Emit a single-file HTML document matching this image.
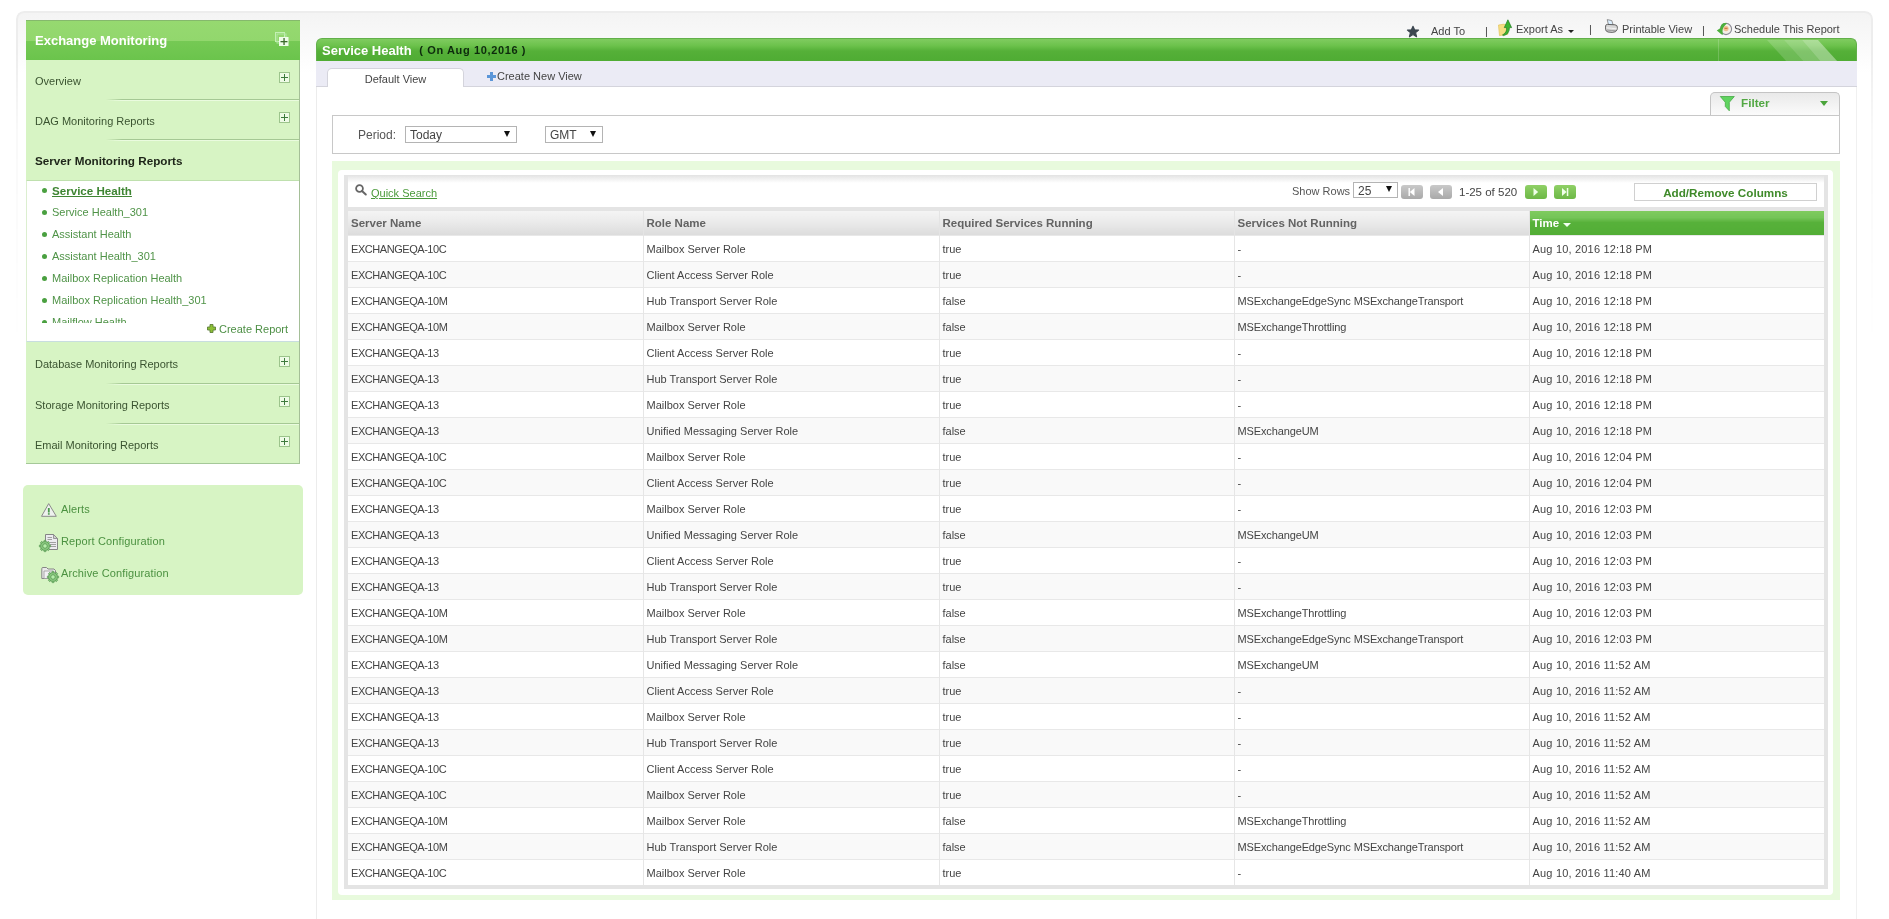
<!DOCTYPE html>
<html><head><meta charset="utf-8">
<style>
*{box-sizing:border-box;margin:0;padding:0}
html,body{width:1889px;height:919px;overflow:hidden;background:#fff;font-family:"Liberation Sans",sans-serif;font-size:11px;color:#444}
.abs{position:absolute}
svg{position:absolute;overflow:visible}
#outer{position:absolute;left:16px;top:11px;width:1857px;height:500px;border:2px solid #ededed;border-bottom:none;border-radius:8px 8px 0 0;background:linear-gradient(#f4f4f4,#f9f9f9 28px,#fff 60px);-webkit-mask-image:linear-gradient(#000 0,#000 40px,rgba(0,0,0,0.35) 120px,transparent 340px)}
#side{position:absolute;left:26px;top:20px;width:274px;height:444px;background:#d7f4c4;border-right:1px solid #a5bf98;border-bottom:1px solid #a5c898}
#sidehd{position:absolute;left:0;top:0;width:274px;height:40px;background:linear-gradient(#96d970,#92d76d 50%,#75c954 52%,#6bc44c);border-top:1px solid #85b96c;color:#fff;font-weight:bold;font-size:13px;padding:12px 0 0 9px}
.sitem{position:absolute;left:0;width:273px;height:40px;color:#3a5330;padding:14px 0 0 9px}
.sep{position:absolute;left:0;width:273px;height:1px;background:linear-gradient(to right,rgba(165,200,148,0) 0,rgba(165,200,148,0) 80px,#a5c894 96px,#a5c894)}
.sep:after{content:"";position:absolute;left:0;top:1px;width:273px;height:1px;background:linear-gradient(to right,rgba(236,252,226,0) 0,rgba(236,252,226,0) 80px,#eafbdf 96px,#eafbdf)}
.plus{position:absolute;left:253px;width:11px;height:11px;border:1px solid #9cc48c;background:#eefbe6}
.plus:before{content:"";position:absolute;left:1px;top:4px;width:7px;height:1px;background:#3d7a3d}
.plus:after{content:"";position:absolute;left:4px;top:1px;width:1px;height:7px;background:#3d7a3d}
#sub{position:absolute;left:0;top:160px;width:273px;height:162px;background:#fff;border-left:1px solid #dcefd0;border-top:1px solid #bfe0ae;border-bottom:1px solid #c8dde0}
.li{position:absolute;left:25px;color:#4f9347;font-size:11px;white-space:nowrap}
.li:before{content:"";position:absolute;left:-10px;top:3.5px;width:5px;height:5px;border-radius:50%;background:#4aa040}
#box2{position:absolute;left:23px;top:485px;width:280px;height:110px;background:#d7f4c4;border-radius:5px}
.b2{position:absolute;left:38px;color:#4b9140;font-size:11px;letter-spacing:0.12px}
#title{position:absolute;left:316px;top:38px;width:1541px;height:23px;border:1px solid #62b04a;border-bottom:none;border-radius:6px 6px 0 0;background:linear-gradient(#80cc60,#6cc24c 30%,#55b038 55%,#4fac33);color:#fff;font-weight:bold;font-size:13px;padding:4px 0 0 5px;overflow:hidden}
#tabbar{position:absolute;left:316px;top:61px;width:1541px;height:26px;background:#ebebf5;border-bottom:1px solid #d4d4dc}
#deftab{position:absolute;left:11px;top:7px;width:137px;height:19px;background:#fff;border:1px solid #d4d4dc;border-bottom:none;border-radius:5px 5px 0 0;font-size:11px;color:#444;text-align:center;padding-top:4px}
#content{position:absolute;left:316px;top:87px;width:1541px;height:840px;background:#fff;border-left:1px solid #ececec;border-right:1px solid #f0f0f0}
#filter{position:absolute;left:1710px;top:92px;width:130px;height:23px;border:1px solid #c4c4c4;border-bottom:none;border-radius:5px 5px 0 0;background:linear-gradient(#e9e9e9,#fbfbfb)}
#period{position:absolute;left:332px;top:115px;width:1508px;height:39px;border:1px solid #c8c8c8;background:#fff}
.sel{position:absolute;height:17px;border:1px solid #b4b4b4;background:#fff;font-size:12px;color:#444;padding:1px 0 0 4px}
.tri{position:absolute;width:0;height:0;border-left:3px solid transparent;border-right:3px solid transparent;border-top:6px solid #111}
#gpanel{position:absolute;left:332px;top:161px;width:1508px;height:739px;background:#e8fadd}
#wpanel{position:absolute;left:338px;top:170px;width:1495px;height:725px;background:#fff;border-radius:4px}
#gray{position:absolute;left:344px;top:175px;width:1484px;height:714px;background:#e4e4e4}
#qs{position:absolute;left:348px;top:176px;width:1476px;height:31px;background:linear-gradient(#e6e6e6,#fff 7px,#fff)}
.pbtn{position:absolute;top:9px;width:22px;height:14px;border-radius:3px}
.gbtn{background:linear-gradient(#c9c9c9,#a9a9a9)}
.grbtn{background:linear-gradient(#8fd066,#6db846)}
table{position:absolute;left:348px;top:211px;width:1476px;border-collapse:collapse;table-layout:fixed;background:#fff}
th{height:24px;text-align:left;font-weight:bold;color:#636363;font-size:11.5px;padding:0 0 0 3px;background:linear-gradient(#f4f4f4,#ececec 40%,#dcdcdc);border-right:1px solid #e4e4e4}
th.time{background:linear-gradient(#7fcb5f 0,#74c458 28%,#57b13a 48%,#52ad35);color:#fff;border-right:none;border-left:1px solid #f0f0f0}
td{height:26px;padding:2px 0 0 3px;color:#444;font-size:11px;border-top:1px solid #e8e8e8;border-right:1px solid #e6e6e6;white-space:nowrap;overflow:hidden}
td:last-child{border-right:none}
tr.alt td{background:#f9f9f9}
td:first-child{letter-spacing:-0.45px}
td:nth-child(4){letter-spacing:-0.13px}
td:last-child{letter-spacing:0.19px}
</style></head><body><div id="root" style="position:absolute;left:0;top:0;width:1889px;height:919px;overflow:hidden;will-change:transform">
<div id="outer"></div>
<div id="side">
  <div id="sidehd">Exchange Monitoring</div>
  <svg style="left:249px;top:12px" width="16" height="16" viewBox="0 0 16 16">
    <rect x="0.5" y="0.5" width="9" height="9" fill="none" stroke="#c4f0b4" stroke-width="1"/>
    <rect x="2" y="2" width="9" height="9" fill="none" stroke="#b0e8a0" stroke-width="1"/>
    <rect x="4" y="5" width="9.5" height="9" fill="#effce8"/>
    <rect x="5.5" y="9" width="7" height="1.3" fill="#3a6a2a"/><rect x="8.4" y="6" width="1.3" height="7" fill="#3a6a2a"/>
  </svg>
  <div class="sitem" style="top:41px">Overview</div>
  <div class="plus" style="top:52px"></div>
  <div class="sep" style="top:79px"></div>
  <div class="sitem" style="top:81px">DAG Monitoring Reports</div>
  <div class="plus" style="top:92px"></div>
  <div class="sep" style="top:119px"></div>
  <div class="sitem" style="top:120px;font-weight:bold;color:#1d2418;font-size:11.7px">Server Monitoring Reports</div>
  <div id="sub">
    <div class="li" style="top:3px;font-weight:bold;text-decoration:underline;text-underline-offset:0.5px;color:#3f8533;font-size:11.6px">Service Health</div>
    <div class="li" style="top:25px">Service Health_301</div>
    <div class="li" style="top:47px">Assistant Health</div>
    <div class="li" style="top:69px">Assistant Health_301</div>
    <div class="li" style="top:91px">Mailbox Replication Health</div>
    <div class="li" style="top:113px">Mailbox Replication Health_301</div>
    <div style="position:absolute;left:0;top:135px;width:270px;height:7px;overflow:hidden"><div class="li" style="top:0">Mailflow Health</div></div>
    <svg style="left:180px;top:143px" width="9" height="9" viewBox="0 0 9 9"><path d="M3,0.5 H6 V3 H8.5 V6 H6 V8.5 H3 V6 H0.5 V3 H3 Z" fill="#8cc034" stroke="#5f7f3a" stroke-width="0.9"/></svg>
    <div class="abs" style="top:142px;left:192px;color:#4d8f45;font-size:11px">Create Report</div>
  </div>
  <div class="sitem" style="top:324px">Database Monitoring Reports</div>
  <div class="plus" style="top:336px"></div>
  <div class="sep" style="top:363px"></div>
  <div class="sitem" style="top:365px">Storage Monitoring Reports</div>
  <div class="plus" style="top:376px"></div>
  <div class="sep" style="top:403px"></div>
  <div class="sitem" style="top:405px">Email Monitoring Reports</div>
  <div class="plus" style="top:416px"></div>
</div>
<div id="box2">
  <svg style="left:18px;top:18px" width="16" height="14" viewBox="0 0 16 14"><path d="M7.7,0.6 L15.3,13.3 L0.5,13.3 Z" fill="#eef2ee" stroke="#8a8a8a" stroke-width="1" stroke-linejoin="round"/><rect x="6.9" y="5" width="1.8" height="4.5" fill="#4a9a4a"/><rect x="6.9" y="10.2" width="1.8" height="1.5" fill="#4a9a4a"/></svg>
  <div class="b2" style="top:18px">Alerts</div>
  <svg style="left:22px;top:49px" width="14" height="16" viewBox="0 0 14 16"><path d="M0.5,0.5 H8.5 L12.5,4.5 V15.5 H0.5 Z" fill="#ececf0" stroke="#858585" stroke-width="1"/><path d="M8.5,0.5 V4.5 H12.5 Z" fill="#d0d0d0" stroke="#858585" stroke-width="0.8"/><g stroke="#a0a0a0" stroke-width="1"><line x1="2.5" y1="3.5" x2="7" y2="3.5"/><line x1="2.5" y1="5.5" x2="7" y2="5.5"/><line x1="5" y1="8.5" x2="11" y2="8.5"/><line x1="5" y1="10.5" x2="11" y2="10.5"/><line x1="5" y1="12.5" x2="11" y2="12.5"/></g></svg>
  <svg style="left:16px;top:55px" width="12" height="12" viewBox="-6 -6 12 12"><g fill="#8fce84" stroke="#5a9a55" stroke-width="0.8"><rect x="-1.1" y="-5.6" width="2.2" height="11.2" rx="0.5"/><rect x="-5.6" y="-1.1" width="11.2" height="2.2" rx="0.5"/><rect x="-1.1" y="-5.6" width="2.2" height="11.2" rx="0.5" transform="rotate(45)"/><rect x="-1.1" y="-5.6" width="2.2" height="11.2" rx="0.5" transform="rotate(-45)"/><circle r="4.3"/></g><circle r="2.3" fill="#b5ecaa" stroke="#5a9a55" stroke-width="0.9"/></svg>
  <div class="b2" style="top:50px">Report Configuration</div>
  <svg style="left:18px;top:82px" width="16" height="13" viewBox="0 0 16 13"><path d="M0.8,1.5 Q0.8,0.5 2,0.5 H5.5 L7,2 H13 L14.5,3.5 V11.5 H0.8 Z" fill="#eaeaea" stroke="#858585" stroke-width="1"/><path d="M3,4 H12 V11.5 H3 Z" fill="#f2f0f4" stroke="#999" stroke-width="0.8"/></svg>
  <svg style="left:24px;top:86px" width="12" height="12" viewBox="-6 -6 12 12"><g fill="#8fce84" stroke="#5a9a55" stroke-width="0.8"><rect x="-1.1" y="-5.6" width="2.2" height="11.2" rx="0.5"/><rect x="-5.6" y="-1.1" width="11.2" height="2.2" rx="0.5"/><rect x="-1.1" y="-5.6" width="2.2" height="11.2" rx="0.5" transform="rotate(45)"/><rect x="-1.1" y="-5.6" width="2.2" height="11.2" rx="0.5" transform="rotate(-45)"/><circle r="4.3"/></g><circle r="2.3" fill="#b5ecaa" stroke="#5a9a55" stroke-width="0.9"/></svg>
  <div class="b2" style="top:82px">Archive Configuration</div>
</div>

<div id="content"></div>
<div id="title">Service Health <span style="position:relative;top:-1px;color:#0d2a0d;margin-left:4px;font-size:11px;letter-spacing:0.63px">( On Aug 10,2016 )</span>
  <div class="abs" style="left:1401px;top:0;width:1px;height:23px;background:rgba(255,255,255,0.18)"></div>
  <svg style="left:1450px;top:1px" width="72" height="22" viewBox="0 0 72 23" preserveAspectRatio="none">
    <path d="M0,0 H17 L37,23 H20 Z" fill="rgba(255,255,255,0.16)"/>
    <path d="M17,0 H35 L54,23 H37 Z" fill="rgba(255,255,255,0.26)"/>
    <path d="M35,0 H51 L71,23 H54 Z" fill="rgba(255,255,255,0.38)"/>
  </svg>
</div>
<div id="tabbar"><div id="deftab">Default View</div>
  <svg style="left:171px;top:11px" width="9" height="9" viewBox="0 0 9 9"><path d="M3,0 H6 V3 H9 V6 H6 V9 H3 V6 H0 V3 H3 Z" fill="#5b96d8"/></svg>
  <div class="abs" style="left:181px;top:9px;color:#444">Create New View</div>
</div>

<svg style="left:1407px;top:26px" width="12" height="11" viewBox="0 0 12 11"><path d="M6,0.2 L7.6,3.8 L11.6,4.1 L8.6,6.7 L9.6,10.8 L6,8.6 L2.4,10.8 L3.4,6.7 L0.4,4.1 L4.4,3.8 Z" fill="#3d4750" stroke="#3d4750" stroke-width="1.1" stroke-linejoin="round"/></svg>
<div class="abs" style="left:1431px;top:25px">Add To</div>
<div class="abs" style="left:1485px;top:25px">|</div>
<svg style="left:1498px;top:19px" width="14" height="17" viewBox="0 0 14 17"><path d="M0.5,6 L6,5.2 L9,6.5 L10,15.2 L1.5,16.6 Z" fill="#f6de82" stroke="#e2c158" stroke-width="0.7"/><path d="M4.5,16 Q9.2,13.5 8.6,8.6 L6.3,8.6 L9.9,0.8 L13.6,8.6 L11.4,8.6 Q11.6,15 5.5,16.6 Z" fill="#3cb531" stroke="#1f7a1f" stroke-width="0.7" stroke-linejoin="round"/></svg>
<div class="abs" style="left:1516px;top:23px">Export As</div>
<div class="tri" style="left:1568px;top:30px;border-left-width:3px;border-right-width:3px;border-top-width:3.5px;border-top-color:#222"></div>
<div class="abs" style="left:1589px;top:23px">|</div>
<svg style="left:1605px;top:19px" width="13" height="14" viewBox="0 0 13 14"><path d="M2.2,0.6 L6.8,1.6 L8.2,6.2 L3.6,6.2 Z" fill="#dcefff" stroke="#7a7a7a" stroke-width="0.8"/><path d="M0.6,6.8 Q0.8,5.4 2.6,5.4 L10,5.8 Q12.4,6.2 12.4,8.2 L12,10.8 Q11.2,13.4 7.2,13.4 L3,13 Q0.6,12.4 0.6,10.2 Z" fill="#d6d6d6" stroke="#555" stroke-width="0.9"/><path d="M1.2,8.8 Q6,9.2 11.8,9.8" fill="none" stroke="#f4f4f4" stroke-width="1"/><path d="M2,11 Q6,11.6 11,11.8" fill="none" stroke="#888" stroke-width="0.8"/></svg>
<div class="abs" style="left:1622px;top:23px">Printable View</div>
<div class="abs" style="left:1702px;top:24px">|</div>
<svg style="left:1716px;top:22px" width="15" height="14" viewBox="0 0 15 14"><circle cx="10" cy="7" r="5.6" fill="#f4efe8" stroke="#8a8a96" stroke-width="1.1"/><circle cx="10" cy="6.6" r="2.6" fill="#f2c090"/><path d="M8.5,6.3 H11.5" stroke="#c06030" stroke-width="0.9"/><path d="M11,1.2 Q5,0 4.5,6 L0.8,8.5 L5,12 Q6,13 7,12.5 Q5.5,7 8.5,4 Z" fill="#4caf3c"/></svg>
<div class="abs" style="left:1734px;top:23px">Schedule This Report</div>

<div id="period">
  <div class="abs" style="left:25px;top:12px;font-size:12px;color:#555">Period:</div>
  <div class="sel" style="left:72px;top:10px;width:112px">Today<div class="tri" style="left:98px;top:4px"></div></div>
  <div class="sel" style="left:212px;top:10px;width:58px">GMT<div class="tri" style="left:44px;top:4px"></div></div>
</div>
<div id="filter">
  <svg style="left:9px;top:3px" width="15" height="15" viewBox="0 0 15 15"><path d="M0.3,0.5 H14.3 L9.3,6.3 V14.8 L5.3,10.5 V6.3 Z" fill="#5fd45f" stroke="#45a845" stroke-width="0.8" stroke-linejoin="round"/></svg>
  <div class="abs" style="left:30px;top:3px;font-weight:bold;color:#52a843;font-size:11.7px">Filter</div>
  <div class="tri" style="left:109px;top:8px;border-left-width:4.5px;border-right-width:4.5px;border-top-width:5px;border-top-color:#4aa43a"></div>
</div>

<div id="gpanel"></div>
<div id="wpanel"></div>
<div id="gray"></div>
<div id="qs">
  <svg style="left:7px;top:8px" width="12" height="12" viewBox="0 0 12 12"><circle cx="4.5" cy="4.5" r="3.4" fill="none" stroke="#666" stroke-width="1.8"/><path d="M7,7 L10.8,10.5" stroke="#666" stroke-width="2" stroke-linecap="round"/></svg>
  <div class="abs" style="left:23px;top:11px;color:#4a9a3a;text-decoration:underline">Quick Search</div>
  <div class="abs" style="left:944px;top:9px;color:#555">Show Rows</div>
  <div class="sel" style="left:1005px;top:6px;width:45px;height:16px;padding-top:1px">25<div class="tri" style="left:32px;top:3px"></div></div>
  <div class="pbtn gbtn" style="left:1053px"><svg style="left:7px;top:3px" width="7" height="8" viewBox="0 0 7 8"><rect x="0.5" y="0" width="1.4" height="8" fill="#fff"/><path d="M6.5,0 V8 L1.8,4 Z" fill="#fff"/></svg></div>
  <div class="pbtn gbtn" style="left:1082px"><svg style="left:8px;top:3px" width="6" height="8" viewBox="0 0 6 8"><path d="M5,0 V8 L0,4 Z" fill="#fff"/></svg></div>
  <div class="abs" style="left:1111px;top:10px;color:#444;font-size:11.5px">1-25 of 520</div>
  <div class="pbtn grbtn" style="left:1177px"><svg style="left:8px;top:3px" width="6" height="8" viewBox="0 0 6 8"><path d="M0.5,0 V8 L5.2,4 Z" fill="#efffe8"/></svg></div>
  <div class="pbtn grbtn" style="left:1206px"><svg style="left:8px;top:3px" width="7" height="8" viewBox="0 0 7 8"><path d="M0,0 V8 L4.6,4 Z" fill="#efffe8"/><rect x="4.8" y="0" width="1.5" height="8" fill="#efffe8"/></svg></div>
  <div class="abs" style="left:1286px;top:7px;width:183px;height:18px;border:1px solid #d0d0d0;background:#fff;color:#3f8a2a;font-weight:bold;font-size:11.7px;text-align:center;padding-top:2px">Add/Remove Columns</div>
</div>
<table>
<colgroup><col style="width:295px"><col style="width:296px"><col style="width:295px"><col style="width:295px"><col style="width:295px"></colgroup>
<tr><th>Server Name</th><th>Role Name</th><th>Required Services Running</th><th>Services Not Running</th><th class="time">Time <span class="tri" style="position:relative;display:inline-block;top:0px;left:1px;border-left-width:4px;border-right-width:4px;border-top-width:4px;border-top-color:#f0fff0"></span></th></tr>
<tr><td>EXCHANGEQA-10C</td><td>Mailbox Server Role</td><td>true</td><td>-</td><td>Aug 10, 2016 12:18 PM</td></tr>
<tr class="alt"><td>EXCHANGEQA-10C</td><td>Client Access Server Role</td><td>true</td><td>-</td><td>Aug 10, 2016 12:18 PM</td></tr>
<tr><td>EXCHANGEQA-10M</td><td>Hub Transport Server Role</td><td>false</td><td>MSExchangeEdgeSync MSExchangeTransport</td><td>Aug 10, 2016 12:18 PM</td></tr>
<tr class="alt"><td>EXCHANGEQA-10M</td><td>Mailbox Server Role</td><td>false</td><td>MSExchangeThrottling</td><td>Aug 10, 2016 12:18 PM</td></tr>
<tr><td>EXCHANGEQA-13</td><td>Client Access Server Role</td><td>true</td><td>-</td><td>Aug 10, 2016 12:18 PM</td></tr>
<tr class="alt"><td>EXCHANGEQA-13</td><td>Hub Transport Server Role</td><td>true</td><td>-</td><td>Aug 10, 2016 12:18 PM</td></tr>
<tr><td>EXCHANGEQA-13</td><td>Mailbox Server Role</td><td>true</td><td>-</td><td>Aug 10, 2016 12:18 PM</td></tr>
<tr class="alt"><td>EXCHANGEQA-13</td><td>Unified Messaging Server Role</td><td>false</td><td>MSExchangeUM</td><td>Aug 10, 2016 12:18 PM</td></tr>
<tr><td>EXCHANGEQA-10C</td><td>Mailbox Server Role</td><td>true</td><td>-</td><td>Aug 10, 2016 12:04 PM</td></tr>
<tr class="alt"><td>EXCHANGEQA-10C</td><td>Client Access Server Role</td><td>true</td><td>-</td><td>Aug 10, 2016 12:04 PM</td></tr>
<tr><td>EXCHANGEQA-13</td><td>Mailbox Server Role</td><td>true</td><td>-</td><td>Aug 10, 2016 12:03 PM</td></tr>
<tr class="alt"><td>EXCHANGEQA-13</td><td>Unified Messaging Server Role</td><td>false</td><td>MSExchangeUM</td><td>Aug 10, 2016 12:03 PM</td></tr>
<tr><td>EXCHANGEQA-13</td><td>Client Access Server Role</td><td>true</td><td>-</td><td>Aug 10, 2016 12:03 PM</td></tr>
<tr class="alt"><td>EXCHANGEQA-13</td><td>Hub Transport Server Role</td><td>true</td><td>-</td><td>Aug 10, 2016 12:03 PM</td></tr>
<tr><td>EXCHANGEQA-10M</td><td>Mailbox Server Role</td><td>false</td><td>MSExchangeThrottling</td><td>Aug 10, 2016 12:03 PM</td></tr>
<tr class="alt"><td>EXCHANGEQA-10M</td><td>Hub Transport Server Role</td><td>false</td><td>MSExchangeEdgeSync MSExchangeTransport</td><td>Aug 10, 2016 12:03 PM</td></tr>
<tr><td>EXCHANGEQA-13</td><td>Unified Messaging Server Role</td><td>false</td><td>MSExchangeUM</td><td>Aug 10, 2016 11:52 AM</td></tr>
<tr class="alt"><td>EXCHANGEQA-13</td><td>Client Access Server Role</td><td>true</td><td>-</td><td>Aug 10, 2016 11:52 AM</td></tr>
<tr><td>EXCHANGEQA-13</td><td>Mailbox Server Role</td><td>true</td><td>-</td><td>Aug 10, 2016 11:52 AM</td></tr>
<tr class="alt"><td>EXCHANGEQA-13</td><td>Hub Transport Server Role</td><td>true</td><td>-</td><td>Aug 10, 2016 11:52 AM</td></tr>
<tr><td>EXCHANGEQA-10C</td><td>Client Access Server Role</td><td>true</td><td>-</td><td>Aug 10, 2016 11:52 AM</td></tr>
<tr class="alt"><td>EXCHANGEQA-10C</td><td>Mailbox Server Role</td><td>true</td><td>-</td><td>Aug 10, 2016 11:52 AM</td></tr>
<tr><td>EXCHANGEQA-10M</td><td>Mailbox Server Role</td><td>false</td><td>MSExchangeThrottling</td><td>Aug 10, 2016 11:52 AM</td></tr>
<tr class="alt"><td>EXCHANGEQA-10M</td><td>Hub Transport Server Role</td><td>false</td><td>MSExchangeEdgeSync MSExchangeTransport</td><td>Aug 10, 2016 11:52 AM</td></tr>
<tr><td>EXCHANGEQA-10C</td><td>Mailbox Server Role</td><td>true</td><td>-</td><td>Aug 10, 2016 11:40 AM</td></tr>
</table>
</div></body></html>
